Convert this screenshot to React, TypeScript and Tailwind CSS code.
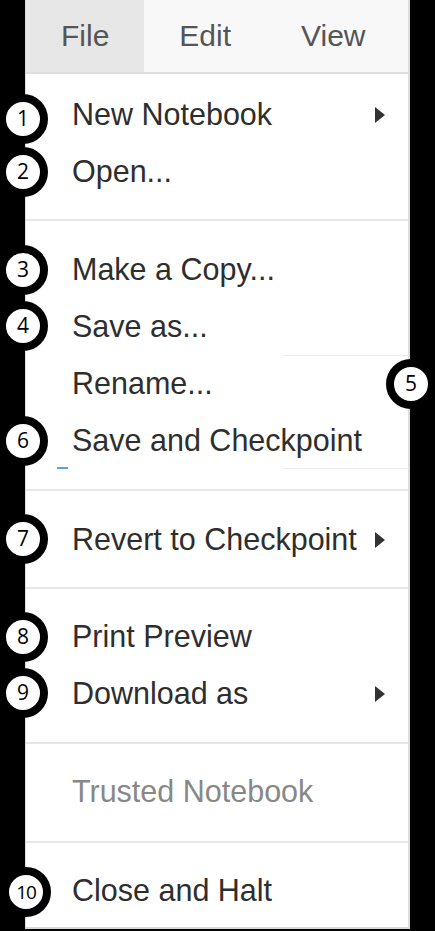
import type { ReactNode } from "react";

type Item = { label: string; sub?: boolean; muted?: boolean };

const groups: { items: Item[]; pt: string; pb: string }[] = [
  {
    pt: "pt-[12px]",
    pb: "pb-[19px]",
    items: [{ label: "New Notebook", sub: true }, { label: "Open..." }],
  },
  {
    pt: "pt-[20px]",
    pb: "pb-[20px]",
    items: [
      { label: "Make a Copy..." },
      { label: "Save as..." },
      { label: "Rename..." },
      { label: "Save and Checkpoint" },
    ],
  },
  {
    pt: "pt-[20px]",
    pb: "pb-[19px]",
    items: [{ label: "Revert to Checkpoint", sub: true }],
  },
  {
    pt: "pt-[19px]",
    pb: "pb-[20px]",
    items: [{ label: "Print Preview" }, { label: "Download as", sub: true }],
  },
  {
    pt: "pt-[19px]",
    pb: "pb-[21px]",
    items: [{ label: "Trusted Notebook", muted: true }],
  },
  {
    pt: "pt-[19px]",
    pb: "pb-[8px]",
    items: [{ label: "Close and Halt" }],
  },
];

// numbered callouts laid over the menu
const badges = [
  { n: "1", x: 23, y: 119 },
  { n: "2", x: 23, y: 172 },
  { n: "3", x: 23, y: 270 },
  { n: "4", x: 23, y: 326 },
  { n: "5", x: 411, y: 384 },
  { n: "6", x: 23, y: 441 },
  { n: "7", x: 23, y: 539 },
  { n: "8", x: 23, y: 637 },
  { n: "9", x: 23, y: 693 },
  { n: "10", x: 26, y: 892 },
];

function Caret() {
  return (
    <svg width="12" height="18" viewBox="0 0 12 18" className="shrink-0">
      <path d="M1 1 L11 9 L1 17 Z" fill="#333" />
    </svg>
  );
}

function Row({ item }: { item: Item }) {
  return (
    <div
      className={`flex h-[57px] items-center justify-between pl-[46px] pr-[22px] ${
        item.muted ? "text-[#888]" : "text-[#2e2e2e]"
      }`}
    >
      <span>{item.label}</span>
      {item.sub && <Caret />}
    </div>
  );
}

function Badge({ n, x, y }: { n: string; x: number; y: number }): ReactNode {
  return (
    <div
      className="absolute flex h-[50px] w-[50px] items-center justify-center rounded-full border-[8px] border-black bg-white text-black"
      style={{ left: x - 25, top: y - 25 }}
    >
      <span
        className={n.length > 1 ? "text-[19px] tracking-[-1px]" : "text-[21px]"}
        style={{ fontFamily: '"Open Sans", "Liberation Sans", sans-serif' }}
      >
        {n}
      </span>
    </div>
  );
}

export default function App() {
  return (
    <div
      className="relative h-[931px] w-[435px] overflow-hidden bg-black"
      style={{ fontFamily: '"Liberation Sans", Arial, sans-serif' }}
    >
      <div className="ml-[25px] w-[385px] border-l border-r-2 border-[#dcdcdc] bg-white text-[30.5px]">
        <div className="flex h-[74px] border-b-2 border-[#dedede] bg-[#f8f8f8] text-[30px] leading-[72px] text-[#555]">
          <span className="bg-[#e7e7e7] px-[35px]">File</span>
          <span className="px-[35px]">Edit</span>
          <span className="px-[35px]">View</span>
        </div>

        {groups.map((g, gi) => (
          <div
            key={gi}
            className={`${g.pt} ${g.pb} ${
              gi < groups.length - 1 ? "border-b-2 border-[#e6e6e6]" : "border-b-2 border-[#d8d8d8]"
            }`}
          >
            {g.items.map((it) => (
              <Row key={it.label} item={it} />
            ))}
          </div>
        ))}
      </div>

      {/* faint leftovers of a selection box around Rename */}
      <div className="absolute left-[283px] top-[355px] h-px w-[126px] bg-[#ececec]" />
      <div className="absolute left-[283px] top-[468px] h-px w-[126px] bg-[#ececec]" />
      <div className="absolute left-[57px] top-[467px] h-[2px] w-[11px] bg-[#5aa5e6]" />

      {badges.map((b) => (
        <Badge key={b.n} {...b} />
      ))}
    </div>
  );
}
